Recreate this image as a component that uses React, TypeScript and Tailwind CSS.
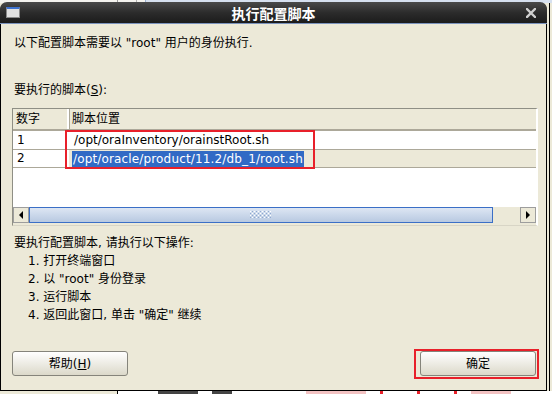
import React from "react";

function Grip() {
  const dots: React.ReactNode[] = [];
  for (let r = 0; r < 4; r++) {
    for (let c = 0; c < 11; c++) {
      if ((r + c) % 2 === 0) dots.push(<rect key={`${r}-${c}`} x={c * 2} y={r * 2} width="1" height="1" fill="#ffffff" />);
      else dots.push(<rect key={`${r}-${c}`} x={c * 2} y={r * 2} width="1" height="1" fill="#8fa8cf" />);
    }
  }
  return (
    <svg width="22" height="8" viewBox="0 0 22 8">
      {dots}
    </svg>
  );
}

export default function App() {
  return (
    <div className="w-[552px] h-[394px] overflow-hidden bg-[#ece9d8] flex flex-col font-['DejaVu_Sans','Noto_Sans_CJK_SC',sans-serif] text-[12px] text-black">
      {/* desktop strip above window */}
      <div className="h-[3px] flex bg-[#f4f3ef]">
        <div className="w-[117px]" />
        <div className="w-px bg-[#9a9a9a]" />
        <div className="w-[18px]" />
        <div className="w-px bg-[#b0b0b0]" />
        <div className="w-[8px]" />
        <div className="w-px bg-[#9bb0d0]" />
        <div className="flex-1 bg-[#d6e0ef]" />
      </div>

      <div className="flex h-[388px]">
        {/* window */}
        <div className="w-[547px] flex flex-col border-x border-b border-black rounded-t-[7px] bg-[#ece9d8]">
          {/* title bar */}
          <div className="h-[22px] flex items-center rounded-t-[7px] bg-gradient-to-b from-[#4a4a4a] via-[#2c2c2c] to-[#1c1c1c] border-b border-[#7b93bd] -mx-px -mt-px">
            <div className="w-[40px] pl-[6px] flex items-center">
              <div className="w-[14px] h-[11px] border border-[#8a8a8a] border-t-2 border-t-[#3e73d0] bg-[#e2e2e2]" />
            </div>
            <div className="flex-1 text-center text-white font-bold text-[14px] leading-[20px] font-['Noto_Sans_CJK_SC',sans-serif]">
              执行配置脚本
            </div>
            <div className="w-[40px] flex justify-end pr-[11px]">
              <svg width="10" height="10" viewBox="0 0 10 10">
                <path d="M1 1 L9 9 M9 1 L1 9" stroke="#cfcfcf" strokeWidth="2.4" strokeLinecap="square" />
              </svg>
            </div>
          </div>

          {/* body */}
          <div className="flex-1 flex flex-col pl-[11px]">
            <div className="mt-[10px] h-[18px] leading-[18px] pl-[2px]">
              以下配置脚本需要以 "root" 用户的身份执行.
            </div>
            <div className="mt-[29px] h-[18px] leading-[18px] pl-[2px]">
              要执行的脚本(<span className="underline">S</span>):
            </div>

            {/* table */}
            <div className="relative mt-[9px] w-[526px] h-[118px] border-l border-t border-[#8f8f85] border-r-2 border-r-white border-b border-b-[#d8d5c6] bg-white flex flex-col">
              <div className="h-[22px] flex bg-[#ece9d8] border-b-2 border-[#aca899]">
                <div className="w-[56px] pl-[3px] leading-[20px] border-r-2 border-r-white shadow-[1px_0_0_#aca899]">数字</div>
                <div className="flex-1 pl-[3px] leading-[20px]">脚本位置</div>
              </div>
              <div className="h-[18px] flex">
                <div className="w-[56px] pl-[4px] leading-[18px]">1</div>
                <div className="flex-1 pl-[5px] leading-[18px]">/opt/oraInventory/orainstRoot.sh</div>
              </div>
              <div className="h-[19px] flex border-y border-[#aca899]">
                <div className="w-[56px] pl-[4px] leading-[17px] bg-white">2</div>
                <div className="flex-1 pl-[3px] bg-[#ece9d8] flex items-center">
                  <span className="bg-[#316ac5] text-white leading-[16px] px-[1px] tracking-[0.15px]">/opt/oracle/product/11.2/db_1/root.sh</span>
                </div>
              </div>
              <div className="flex-1" />
              {/* scrollbar */}
              <div className="h-[16px] flex">
                <div className="w-[16px] border border-[#9d9d9d] bg-[#ece9d8] flex items-center justify-center">
                  <svg width="6" height="8" viewBox="0 0 6 8"><path d="M5 0 L1 4 L5 8 Z" fill="#000" /></svg>
                </div>
                <div className="w-[464px] border border-[#3b6fc6] bg-gradient-to-b from-[#dde6f3] to-[#b8c9e1] flex items-center justify-center">
                  <Grip />
                </div>
                <div className="w-[27px] bg-[#ece9d8]" />
                <div className="w-[16px] border border-[#9d9d9d] bg-[#ece9d8] flex items-center justify-center">
                  <svg width="6" height="8" viewBox="0 0 6 8"><path d="M1 0 L5 4 L1 8 Z" fill="#000" /></svg>
                </div>
              </div>
              <div className="h-[2px] bg-[#ece9d8]" />

              {/* red highlight */}
              <div className="absolute left-[52px] top-[21px] w-[250px] h-[39px] border-2 border-[#e8202a]" />
            </div>

            {/* instructions */}
            <div className="mt-[8px] pl-[2px] flex flex-col">
              <div className="h-[18px] leading-[18px]">要执行配置脚本, 请执行以下操作:</div>
              <div className="h-[18px] leading-[18px] pl-[14px]">1. 打开终端窗口</div>
              <div className="h-[18px] leading-[18px] pl-[14px]">2. 以 "root" 身份登录</div>
              <div className="h-[18px] leading-[18px] pl-[14px]">3. 运行脚本</div>
              <div className="h-[18px] leading-[18px] pl-[14px]">4. 返回此窗口, 单击 "确定" 继续</div>
            </div>

            {/* buttons */}
            <div className="mt-[27px] flex justify-between pr-[10px]">
              <div className="w-[116px] h-[25px] border border-[#85847b] rounded-[3px] bg-gradient-to-b from-white to-[#dcd9ca] flex items-center justify-center">
                帮助(<span className="underline">H</span>)
              </div>
              <div className="relative w-[116px] h-[25px]">
                <div className="w-[116px] h-[25px] border border-[#85847b] rounded-[3px] bg-gradient-to-b from-white to-[#dcd9ca] flex items-center justify-center">
                  确定
                </div>
                <div className="absolute -left-[6px] -top-[2px] w-[125px] h-[30px] border-2 border-[#e8202a]" />
              </div>
            </div>
          </div>
        </div>

        {/* desktop strip right */}
        <div className="flex-1 flex bg-[#ece9d8]">
          <div className="w-[2px]" />
          <div className="w-px bg-black" />
          <div className="flex-1" />
        </div>
      </div>

      {/* desktop strip below */}
      <div className="h-[3px] flex">
        <div className="w-[117px] bg-[#ece9d8]" />
        <div className="w-px bg-black" />
        <div className="flex-1 bg-white flex gap-[14px] pl-[40px]">
          <div className="w-[40px] bg-[#444]" />
          <div className="w-[20px] bg-[#444]" />
          <div className="w-[60px] bg-[#f3c3c3] ml-[60px]" />
          <div className="w-[3px] bg-[#e8202a]" />
          <div className="w-[3px] bg-[#e8202a] ml-[20px]" />
          <div className="w-[3px] bg-[#e8202a] ml-[20px]" />
          <div className="w-[40px] bg-[#f3c3c3]" />
        </div>
      </div>
    </div>
  );
}
